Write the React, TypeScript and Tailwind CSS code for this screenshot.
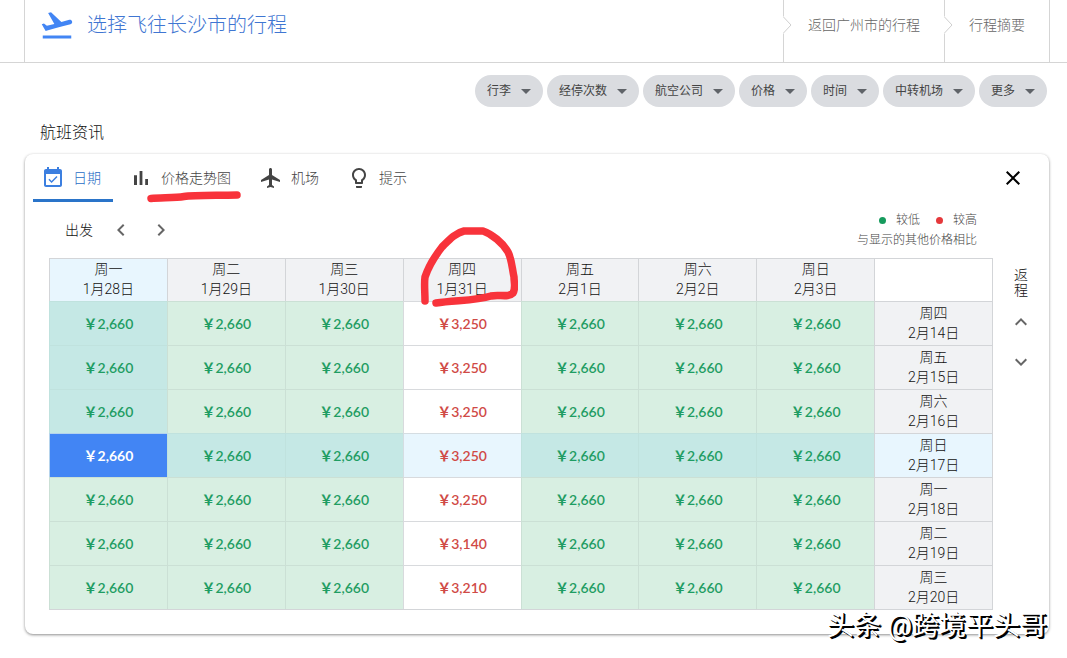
import { useState } from 'react';
import clsx from 'clsx';

const filters = ['行李', '经停次数', '航空公司', '价格', '时间', '中转机场', '更多'];

const tabs = [
  {
    label: '日期',
    icon: 'M16.53 11.06L15.47 10l-4.88 4.88-2.12-2.12-1.06 1.06L10.59 17l5.94-5.94zM19 3h-1V1h-2v2H8V1H6v2H5c-1.11 0-1.99.9-1.99 2L3 19c0 1.1.89 2 2 2h14c1.1 0 2-.9 2-2V5c0-1.1-.9-2-2-2zm0 16H5V8h14v11z',
  },
  {
    label: '价格走势图',
    icon: 'M5 9.2h3V19H5zM10.6 5h2.8v14h-2.8zm5.6 8H19v6h-2.8z',
    marked: true,
  },
  {
    label: '机场',
    icon: 'M21 16v-2l-8-5V3.5c0-.83-.67-1.5-1.5-1.5S10 2.67 10 3.5V9l-8 5v2l8-2.5V19l-2 1.5V22l3.500-1 3.500 1v-1.500L13 19v-5.500l8 2.500z',
  },
  {
    label: '提示',
    icon: 'M9 21c0 .55.45 1 1 1h4c.55 0 1-.45 1-1v-1H9v1zm3-19C8.140 2 5 5.140 5 9c0 2.380 1.190 4.470 3 5.740V17c0 .55.45 1 1 1h6c.55 0 1-.45 1-1v-2.260c1.810-1.270 3-3.360 3-5.740 0-3.860-3.140-7-7-7zm2.850 11.100l-.85.6V16h-4v-2.300l-.85-.6C7.800 12.160 7 10.630 7 9c0-2.760 2.240-5 5-5s5 2.240 5 5c0 1.630-.8 3.160-2.150 4.100z',
  },
];

const departures = [
  ['周一', '1月28日'],
  ['周二', '1月29日'],
  ['周三', '1月30日'],
  ['周四', '1月31日'],
  ['周五', '2月1日'],
  ['周六', '2月2日'],
  ['周日', '2月3日'],
];

const returns = [
  { day: '周四', date: '2月14日', high: '3,250' },
  { day: '周五', date: '2月15日', high: '3,250' },
  { day: '周六', date: '2月16日', high: '3,250' },
  { day: '周日', date: '2月17日', high: '3,250' },
  { day: '周一', date: '2月18日', high: '3,250' },
  { day: '周二', date: '2月19日', high: '3,140' },
  { day: '周三', date: '2月20日', high: '3,210' },
];

const HIGH_COL = 3;
const SELECTED_COL = 0;
const SELECTED_ROW = 3;

function Icon({ d, className = 'size-6' }: { d: string; className?: string }) {
  return (
    <svg viewBox="0 0 24 24" className={clsx('shrink-0 fill-current', className)} aria-hidden="true">
      <path d={d} />
    </svg>
  );
}

function Step({ label }: { label: string }) {
  return (
    <a href="#" className="relative flex items-center border-l border-[#d5d5d5] px-6 pb-3 text-sm text-[#666]">
      <svg viewBox="0 0 9 18" className="absolute top-4 -left-px h-[18px] w-[9px]" aria-hidden="true">
        <path d="M0 1L8 9L0 17" fill="#fff" stroke="#fff" strokeWidth="2" />
        <path d="M.5 1L8 9L.5 17" fill="none" stroke="#cfcfcf" />
      </svg>
      {label}
    </a>
  );
}

function cellStyle(row: number, col: number) {
  const inPath = (col === SELECTED_COL && row < SELECTED_ROW) || row === SELECTED_ROW;
  if (row === SELECTED_ROW && col === SELECTED_COL) return 'bg-[#4285f4] border-[#b5d3ec] font-bold text-white';
  if (col === HIGH_COL) {
    return inPath
      ? 'bg-[#e8f6fe] border-[#d5dde2] font-semibold text-[#d04a46]'
      : 'bg-white border-[#d8dadd] font-semibold text-[#d04a46]';
  }
  return inPath
    ? 'bg-[#c5e8e5] border-[#c0e2de] font-semibold text-[#1f9d63]'
    : 'bg-[#d8efe2] border-[#cbe0d5] font-semibold text-[#1f9d63]';
}

export default function App() {
  const [tab, setTab] = useState('日期');

  return (
    <div className="min-h-screen bg-white pb-6 font-['Roboto','Noto_Sans_CJK_SC',sans-serif] font-light text-[#111]">
      <header className="flex h-[63px] border-b border-[#d5d5d5] pr-[17px] pl-6">
        <div className="flex flex-1 items-center border-l border-[#d5d5d5] pb-3 pl-3.5 text-[#3f76d2]">
          <Icon
            className="size-9 text-[#4285f4]"
            d="M2.500 19h19v2h-19zm19.570-9.360c-.21-.8-1.040-1.280-1.840-1.060L14.920 10l-6.900-6.430-1.930.51 4.140 7.170-4.970 1.330-1.970-1.540-1.450.39 1.820 3.160.77 1.330 1.600-.43 5.310-1.420 4.350-1.160L21 11.490c.81-.23 1.280-1.050 1.070-1.850z"
          />
          <h1 className="ml-3 text-xl font-light">选择飞往长沙市的行程</h1>
        </div>
        <Step label="返回广州市的行程" />
        <Step label="行程摘要" />
        <div className="border-l border-[#d5d5d5]" />
      </header>

      <div className="mt-3 flex justify-end gap-1 pr-5">
        {filters.map((name) => (
          <button key={name} className="flex h-8 items-center gap-2.5 rounded-full bg-[#dadce0] px-3 text-xs font-normal text-[#444]">
            {name}
            <svg viewBox="0 0 10 5" className="h-[5px] w-2.5 fill-[#5f6368]" aria-hidden="true">
              <path d="M0 0h10L5 5z" />
            </svg>
          </button>
        ))}
      </div>

      <h2 className="mt-3.5 ml-10 pb-2 text-base leading-6 font-light">航班资讯</h2>

      <section className="relative mt-px mr-[18px] ml-[25px] rounded-lg pb-6 shadow-[0_1px_3px_rgba(0,0,0,0.45)]">
        <div className="flex items-center justify-between pr-6 pl-2">
          <div className="flex gap-2">
            {tabs.map(({ label, icon, marked }) => (
              <button
                key={label}
                onClick={() => setTab(label)}
                className={clsx(
                  'relative flex h-12 items-center gap-2 border-b-3 pt-0.5 pr-3 pl-2 text-sm',
                  tab === label ? 'border-[#2a74c9] text-[#1f6cc5]' : 'border-transparent text-[#444]',
                )}
              >
                <Icon d={icon} className={clsx('size-6', tab === label ? 'text-[#3c7fe0]' : 'text-[#444]')} />
                {label}
                {marked && (
                  <svg viewBox="0 0 96 13" className="absolute top-9 left-[25px] h-[13px] w-24" aria-hidden="true">
                    <path d="M5 8.500C15 7.500 29 8 38 6.500S68 5.500 91 5" fill="none" stroke="#f8333b" strokeWidth="7.500" strokeLinecap="round" />
                  </svg>
                )}
              </button>
            ))}
          </div>
          <button aria-label="关闭" className="text-black">
            <Icon d="M19 6.410L17.590 5 12 10.590 6.410 5 5 6.410 10.590 12 5 17.590 6.410 19 12 13.410 17.590 19 19 17.590 13.410 12z" />
          </button>
        </div>

        <div className="flex h-14 items-center justify-between pr-[72px] pl-10">
          <div className="flex items-center text-sm">
            <span className="pr-2">出发</span>
            <button aria-label="上一周" className="flex w-10 justify-center text-[#666]">
              <Icon d="M15.410 7.410L14 6l-6 6 6 6 1.410-1.410L10.830 12z" />
            </button>
            <button aria-label="下一周" className="flex w-10 justify-center text-[#666]">
              <Icon d="M10 6L8.590 7.410 13.170 12l-4.580 4.590L10 18l6-6z" />
            </button>
          </div>
          <div className="text-right text-xs leading-5 text-[#444]">
            <div className="flex items-center justify-end gap-4">
              <span className="flex items-center gap-2.5">
                <i className="size-[7px] rounded-full bg-[#169b5d]" />
                较低
              </span>
              <span className="flex items-center gap-2.5">
                <i className="size-[7px] rounded-full bg-[#e5383b]" />
                较高
              </span>
            </div>
            <p>与显示的其他价格相比</p>
          </div>
        </div>

        <div className="flex pl-6">
          <div className="min-w-0 flex-1">
            <table className="w-full table-fixed border-separate border-spacing-0 border-r border-b border-[#d3d5d8] text-center text-sm leading-5">
              <thead>
                <tr className="h-[43px]">
                  {departures.map(([day, date], col) => (
                    <th
                      key={date}
                      scope="col"
                      className={clsx(
                        'relative border-t border-l border-[#d3d5d8] p-0 align-top font-light',
                        col === SELECTED_COL ? 'bg-[#e8f6fe]' : 'bg-[#f1f2f4]',
                      )}
                    >
                      {day}
                      <br />
                      {date}
                      {col === HIGH_COL && (
                        <svg viewBox="0 0 98 82" className="absolute -top-[33px] left-4 h-[82px] w-[98px]" aria-hidden="true">
                          <path
                            d="M5 75C5 66 4 58 5 51C9 39 15 30 22 21C29 14 35 7 44 5H63C72 8 83 17 88 26C92 34 92 42 94 51C94 57 96 62 93 67C88 72 79 68 71 70C55 75 35 74 16 77"
                            fill="none"
                            stroke="#f8333b"
                            strokeWidth="7.500"
                            strokeLinecap="round"
                            strokeLinejoin="round"
                          />
                        </svg>
                      )}
                    </th>
                  ))}
                  <td className="border-t border-l border-[#d3d5d8]" />
                </tr>
              </thead>
              <tbody>
                {returns.map(({ day, date, high }, row) => (
                  <tr key={date} className="h-11">
                    {departures.map(([, dep], col) => (
                      <td
                        key={dep}
                        className={clsx(
                          "border-t border-l p-0 font-['Lato','Noto_Sans_CJK_SC',sans-serif]",
                          cellStyle(row, col),
                        )}
                      >
                        ￥{col === HIGH_COL ? high : '2,660'}
                      </td>
                    ))}
                    <th
                      scope="row"
                      className={clsx(
                        'border-t border-l border-[#d3d5d8] px-0 pt-px pb-0 align-top font-light',
                        row === SELECTED_ROW ? 'bg-[#e8f6fe]' : 'bg-[#f1f2f4]',
                      )}
                    >
                      {day}
                      <br />
                      {date}
                    </th>
                  </tr>
                ))}
              </tbody>
            </table>
          </div>

          <div className="flex w-14 flex-col items-center pt-2.5 text-sm">
            <span className="w-3.5 pb-1 leading-[15px]">返程</span>
            <button aria-label="较早返程" className="flex h-10 items-center text-[#666]">
              <Icon d="M12 8l-6 6 1.410 1.410L12 10.830l4.590 4.580L18 14z" />
            </button>
            <button aria-label="较晚返程" className="flex h-10 items-center text-[#666]">
              <Icon d="M16.590 8.590L12 13.170 7.410 8.590 6 10l6 6 6-6z" />
            </button>
          </div>
        </div>

        <p className="absolute right-0.5 -bottom-3 text-[27px] leading-10 font-normal whitespace-nowrap text-white [text-shadow:1px_1px_0_#000,2px_2px_0_#000]">
          头条 @跨境平头哥
        </p>
      </section>
    </div>
  );
}
